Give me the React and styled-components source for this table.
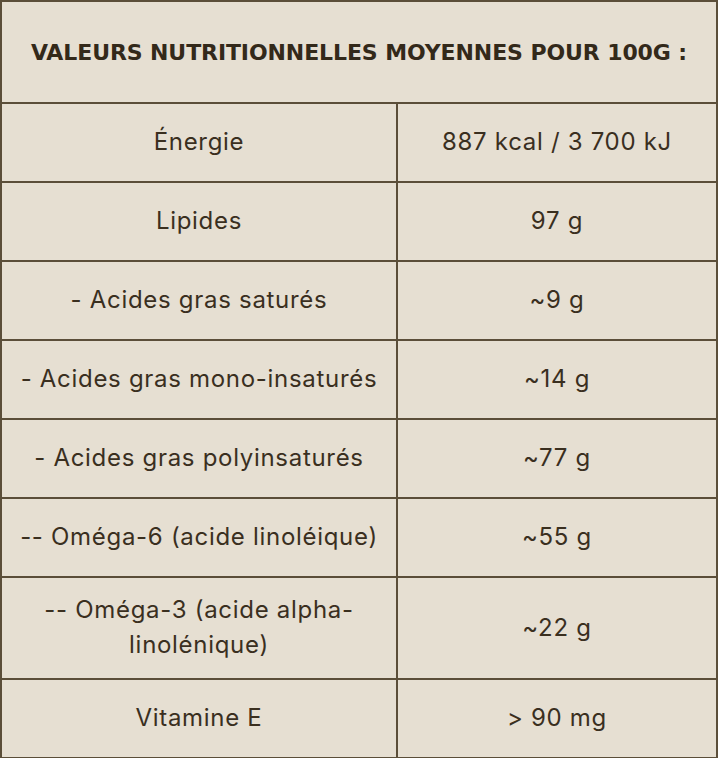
import React from 'react'
import styled, { createGlobalStyle } from 'styled-components'

const Global = createGlobalStyle`
  html, body {
    margin: 0;
    padding: 0;
    background: #e6dfd2;
  }
`

const ink = '#3a2f1f'
const line = '#5b4e39'

const Table = styled.table`
  width: 718px;
  border-collapse: collapse;
  background: #e6dfd2;
  color: ${ink};
  font-family: Inter, "Noto Sans", sans-serif;
  box-sizing: border-box;
`

const HeadCell = styled.th`
  height: 100px;
  padding: 0 8px;
  border: 2px solid ${line};
  font-family: "DejaVu Sans", Inter, sans-serif;
  font-weight: 700;
  font-size: 22px;
  letter-spacing: -0.1px;
  color: #33291a;
  text-transform: uppercase;
  text-align: center;
  vertical-align: middle;
`

const Cell = styled.td`
  height: 47px;
  padding: 14px 10px 16px;
  border: 2px solid ${line};
  font-size: 24px;
  letter-spacing: 0.7px;
  line-height: 35px;
  text-align: center;
  vertical-align: middle;
  width: ${({ $left }) => ($left ? '374px' : 'auto')};
`

const rows = [
  ['Énergie', '887 kcal / 3 700 kJ'],
  ['Lipides', '97 g'],
  ['- Acides gras saturés', '~9 g'],
  ['- Acides gras mono-insaturés', '~14 g'],
  ['- Acides gras polyinsaturés', '~77 g'],
  ['-- Oméga-6 (acide linoléique)', '~55 g'],
  ['-- Oméga-3 (acide alpha-linolénique)', '~22 g'],
  ['Vitamine E', '> 90 mg'],
]

export default function App () {
  return (
    <>
      <Global />
      <Table>
        <thead>
          <tr>
            <HeadCell colSpan={2}>Valeurs nutritionnelles moyennes pour 100g :</HeadCell>
          </tr>
        </thead>
        <tbody>
          {rows.map(([name, value]) => (
            <tr key={name}>
              <Cell $left>{name}</Cell>
              <Cell>{value}</Cell>
            </tr>
          ))}
        </tbody>
      </Table>
    </>
  )
}
